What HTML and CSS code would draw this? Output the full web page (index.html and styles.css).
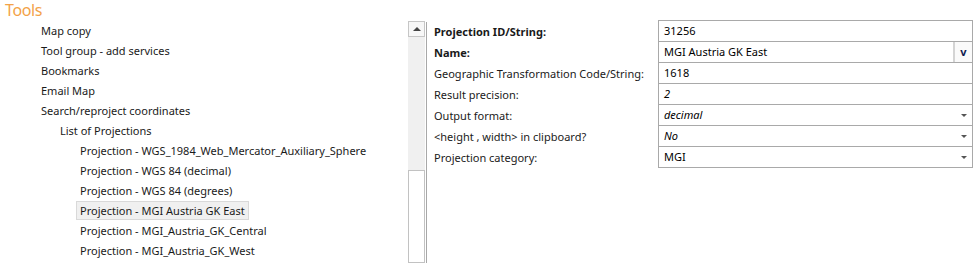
FILE: index.html
```html
<!DOCTYPE html>
<html lang="en">
  <head>
    <meta charset="UTF-8" />
    <title>Tools</title>
    <link rel="stylesheet" href="styles.css">
  </head>
  <body>
    <main class="layout">
      <section class="tree-pane">
        <div class="tree-title">Tools</div>
        <div class="tree-item level-1">Map copy</div>
        <div class="tree-item level-1">Tool group - add services</div>
        <div class="tree-item level-1">Bookmarks</div>
        <div class="tree-item level-1">Email Map</div>
        <div class="tree-item level-1">Search/reproject coordinates</div>
        <div class="tree-item level-2">List of Projections</div>
        <div class="tree-item level-3"><span>Projection - WGS_1984_Web_Mercator_Auxiliary_Sphere</span></div>
        <div class="tree-item level-3"><span>Projection - WGS 84 (decimal)</span></div>
        <div class="tree-item level-3"><span>Projection - WGS 84 (degrees)</span></div>
        <div class="tree-item level-3"><span class="selected">Projection - MGI Austria GK East</span></div>
        <div class="tree-item level-3"><span>Projection - MGI_Austria_GK_Central</span></div>
        <div class="tree-item level-3"><span>Projection - MGI_Austria_GK_West</span></div>
      </section>

      <div class="scrollbar">
        <div class="scroll-button"><span class="up-arrow"></span></div>
        <div class="scroll-track"></div>
        <div class="scroll-thumb"></div>
      </div>

      <div class="splitter"></div>

      <section class="props-pane">
        <div class="props-grid">
          <div class="prop-label bold">Projection ID/String:</div>
          <div class="prop-value first">31256</div>

          <div class="prop-label bold">Name:</div>
          <div class="prop-value with-button">
            <span class="value-text">MGI Austria GK East</span>
            <span class="v-button">v</span>
          </div>

          <div class="prop-label">Geographic Transformation Code/String:</div>
          <div class="prop-value">1618</div>

          <div class="prop-label">Result precision:</div>
          <div class="prop-value italic">2</div>

          <div class="prop-label">Output format:</div>
          <div class="prop-value italic dropdown">decimal<span class="down-arrow"></span></div>

          <div class="prop-label">&lt;height , width&gt; in clipboard?</div>
          <div class="prop-value italic dropdown">No<span class="down-arrow"></span></div>

          <div class="prop-label">Projection category:</div>
          <div class="prop-value dropdown">MGI<span class="down-arrow"></span></div>
        </div>
      </section>
    </main>
  </body>
</html>
```

FILE: styles.css
```css
html {
  height: 100%;
}

body {
  height: 100%;
  margin: 0;
  background-color: white;
  font-family: "Noto Sans", "Open Sans", sans-serif;
  font-size: 11px;
  color: #1a1a1a;
  overflow: hidden;
}

.layout {
  display: flex;
  height: 100%;
}

/* left tree */

.tree-pane {
  width: 408px;
  flex-shrink: 0;
}

.tree-title {
  height: 21px;
  padding-left: 5px;
  font-size: 16px;
  line-height: 20px;
  letter-spacing: -0.4px;
  color: #f3a247;
}

.tree-item {
  height: 20px;
  line-height: 20px;
  white-space: nowrap;
}

.level-1 {
  padding-left: 41px;
}

.level-2 {
  padding-left: 60px;
}

.level-3 {
  padding-left: 76px;
}

.level-3 span {
  display: inline-block;
  padding: 0 3px;
  border: 1px solid transparent;
  line-height: 17px;
}

.level-3 .selected {
  background-color: #f0f0f0;
  border-color: #d9d9d9;
}

/* scrollbar */

.scrollbar {
  width: 17px;
  margin-top: 21px;
  display: flex;
  flex-direction: column;
  background-color: #f0f0f0;
}

.scroll-button {
  height: 16px;
  border: 1px solid #c6c6c6;
  box-sizing: border-box;
  background-color: #f7f7f7;
  display: flex;
  justify-content: center;
  align-items: center;
}

.up-arrow {
  width: 0;
  height: 0;
  border-left: 4px solid transparent;
  border-right: 4px solid transparent;
  border-bottom: 4px solid #444;
}

.scroll-track {
  height: 133px;
}

.scroll-thumb {
  flex: 1;
  background-color: white;
  border: 1px solid #c2c2c2;
}

.splitter {
  width: 1px;
  margin-top: 22px;
  margin-left: 1px;
  background-color: #a8a8a8;
}

/* right properties */

.props-pane {
  flex: 1;
  padding: 21px 0 0 7px;
}

.props-grid {
  display: grid;
  grid-template-columns: 224px 315px;
  grid-auto-rows: 21px;
}

.prop-label {
  line-height: 21px;
  white-space: nowrap;
}

.bold {
  font-weight: bold;
}

.prop-value {
  position: relative;
  box-sizing: border-box;
  border: 1px solid #a9a9a9;
  border-top: none;
  padding-left: 5px;
  line-height: 20px;
  color: #000;
}

.prop-value.first {
  border-top: 1px solid #a9a9a9;
  height: 22px;
  margin-top: -1px;
}

.italic {
  font-style: italic;
}

.with-button {
  display: flex;
  padding-right: 0;
}

.value-text {
  flex: 1;
}

.v-button {
  width: 17px;
  border-left: 2px solid #d4d4d4;
  text-align: center;
  font-weight: bold;
  color: #101a50;
  background-color: #fafafa;
}

.down-arrow {
  position: absolute;
  right: 5px;
  top: 9px;
  width: 0;
  height: 0;
  border-left: 3px solid transparent;
  border-right: 3px solid transparent;
  border-top: 3px solid #555;
}
```
